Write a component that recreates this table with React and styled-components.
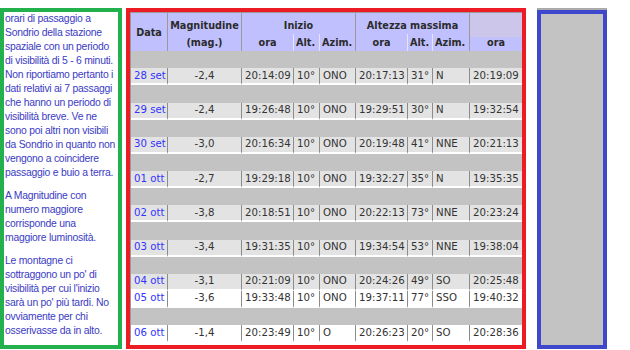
import React from "react";
import styled, { createGlobalStyle } from "styled-components";

const GlobalStyle = createGlobalStyle`
  body {
    margin: 0;
    background: #fff;
  }
`;

const notes = [
  [
    "orari di passaggio a",
    "Sondrio della stazione",
    "spaziale con un periodo",
    "di visibilità di 5 - 6 minuti.",
    "Non riportiamo pertanto i",
    "dati relativi ai 7 passaggi",
    "che hanno un periodo di",
    "visibilità breve. Ve ne",
    "sono poi altri non visibili",
    "da Sondrio in quanto non",
    "vengono a coincidere",
    "passaggio e buio a terra.",
  ],
  [
    "A Magnitudine con",
    "numero maggiore",
    "corrisponde una",
    "maggiore luminosità.",
  ],
  [
    "Le montagne ci",
    "sottraggono un po' di",
    "visibilità per cui l'inizio",
    "sarà un po' più tardi. No",
    "ovviamente per chi",
    "osserivasse da in alto.",
  ],
];

const passes = [
  { date: "28 set", mag: "-2,4", start: "20:14:09", alt0: "10°", az0: "ONO", top: "20:17:13", alt: "31°", az: "N", end: "20:19:09", gap: true },
  { date: "29 set", mag: "-2,4", start: "19:26:48", alt0: "10°", az0: "ONO", top: "19:29:51", alt: "30°", az: "N", end: "19:32:54", gap: true },
  { date: "30 set", mag: "-3,0", start: "20:16:34", alt0: "10°", az0: "ONO", top: "20:19:48", alt: "41°", az: "NNE", end: "20:21:13", gap: true },
  { date: "01 ott", mag: "-2,7", start: "19:29:18", alt0: "10°", az0: "ONO", top: "19:32:27", alt: "35°", az: "N", end: "19:35:35", gap: true },
  { date: "02 ott", mag: "-3,8", start: "20:18:51", alt0: "10°", az0: "ONO", top: "20:22:13", alt: "73°", az: "NNE", end: "20:23:24", gap: true },
  { date: "03 ott", mag: "-3,4", start: "19:31:35", alt0: "10°", az0: "ONO", top: "19:34:54", alt: "53°", az: "NNE", end: "19:38:04", gap: true },
  { date: "04 ott", mag: "-3,1", start: "20:21:09", alt0: "10°", az0: "ONO", top: "20:24:26", alt: "49°", az: "SO", end: "20:25:48", gap: true },
  { date: "05 ott", mag: "-3,6", start: "19:33:48", alt0: "10°", az0: "ONO", top: "19:37:11", alt: "77°", az: "SSO", end: "19:40:32", light: true },
  { date: "06 ott", mag: "-1,4", start: "20:23:49", alt0: "10°", az0: "O", top: "20:26:23", alt: "20°", az: "SO", end: "20:28:36", gap: true, light: true },
];

const widths = [37, 74, 52, 26, 36, 52, 25, 37, 52];

export default function App() {
  return (
    <Page>
      <GlobalStyle />
      <Notes>
        {notes.map((lines, i) => (
          <Para key={i}>
            {lines.map((l, j) => (
              <React.Fragment key={j}>
                {l}
                {j < lines.length - 1 && <br />}
              </React.Fragment>
            ))}
          </Para>
        ))}
      </Notes>

      <TablePanel>
        <Table>
          <colgroup>
            {widths.map((w, i) => (
              <Col key={i} $w={w} />
            ))}
          </colgroup>
          <thead>
            <HeadRow $h={21}>
              <Th rowSpan={2}>Data</Th>
              <Th rowSpan={2} $pad>
                Magnitudine
                <br />
                (mag.)
              </Th>
              <Th colSpan={3} $pad>Inizio</Th>
              <Th colSpan={3} $pad>Altezza massima</Th>
              <EndTh rowSpan={2}>ora</EndTh>
            </HeadRow>
            <HeadRow $h={16}>
              <Th $soft>ora</Th>
              <Th $soft $left>Alt.</Th>
              <Th $left>Azim.</Th>
              <Th $soft>ora</Th>
              <Th $soft $left>Alt.</Th>
              <Th $left>Azim.</Th>
            </HeadRow>
          </thead>
          <tbody>
            {passes.map((p) => (
              <React.Fragment key={p.date}>
                {p.gap && (
                  <GapRow>
                    <Gap colSpan={9} />
                  </GapRow>
                )}
                <DataRow $light={p.light}>
                  <Td>
                    <DateLink>{p.date}</DateLink>
                  </Td>
                  <Td $center>{p.mag}</Td>
                  <Td>{p.start}</Td>
                  <Td>{p.alt0}</Td>
                  <Td>{p.az0}</Td>
                  <Td>{p.top}</Td>
                  <Td>{p.alt}</Td>
                  <Td>{p.az}</Td>
                  <Td>{p.end}</Td>
                </DataRow>
              </React.Fragment>
            ))}
          </tbody>
        </Table>
      </TablePanel>

      <Side />
    </Page>
  );
}

const Page = styled.div`
  display: flex;
  align-items: flex-start;
  padding-top: 8px;
  height: 350px;
  box-sizing: border-box;
  overflow: hidden;
`;

const Notes = styled.aside`
  width: 122px;
  height: 341px;
  flex: none;
  box-sizing: border-box;
  border: 4px solid #22b14c;
  padding: 0 0 0 1px;
  font-family: "Liberation Sans", Arial, sans-serif;
  font-size: 10.4px;
  letter-spacing: -0.25px;
  line-height: 14px;
  color: #3b3bc4;
  white-space: nowrap;
`;

const Para = styled.p`
  margin: 0;
  & + & {
    margin-top: 9px;
  }
`;

const TablePanel = styled.section`
  margin-left: 4px;
  width: 400px;
  height: 341px;
  flex: none;
  box-sizing: border-box;
  border: 4px solid #ed1c24;
  overflow: hidden;
  background: #fff;
`;

const Side = styled.div`
  margin-left: 11px;
  margin-top: 2px;
  width: 70px;
  height: 339px;
  flex: none;
  box-sizing: border-box;
  border: 4px solid #3f48cc;
  background: #c3c3c3;
  box-shadow: 0 -2px 0 #ababab;
`;

const Table = styled.table`
  width: 392px;
  table-layout: fixed;
  border-collapse: separate;
  border-spacing: 0;
  border-left: 1px solid #9a9a9a;
  border-top: 1px solid #9a9a9a;
  font-family: "DejaVu Sans", Verdana, sans-serif;
  color: #333;
`;

const Col = styled.col`
  width: ${(p) => p.$w}px;
`;

const HeadRow = styled.tr`
  height: ${(p) => p.$h}px;
`;

const Th = styled.th`
  padding: ${(p) => (p.$pad ? "3px 0 0" : p.$left ? "0 0 0 2px" : "0")};
  background: #c0c0ff;
  font-size: 9.7px;
  font-weight: bold;
  color: #2b2b2b;
  line-height: 17px;
  text-align: ${(p) => (p.$left ? "left" : "center")};
  white-space: nowrap;
  border-right: 1px solid ${(p) => (p.$soft ? "#e4e4fa" : "#9a9a9a")};
`;

const EndTh = styled.th`
  padding: 0 0 2px;
  vertical-align: bottom;
  background: linear-gradient(#cbc6ea 0 24px, #c0c0ff 24px);
  font-size: 9.7px;
  font-weight: bold;
  color: #2b2b2b;
  line-height: 12px;
  text-align: center;
`;

const GapRow = styled.tr`
  height: 17.25px;
`;

const Gap = styled.td`
  padding: 0;
  background: #c3c3c3;
`;

const DataRow = styled.tr`
  height: 17px;
  background: ${(p) => (p.$light ? "#fff" : "#e3e3e3")};
`;

const Td = styled.td`
  padding: 0 0 0 ${(p) => (p.$center ? "0" : "3px")};
  font-size: 10.2px;
  line-height: 14px;
  text-align: ${(p) => (p.$center ? "center" : "left")};
  white-space: nowrap;
  overflow: hidden;
  border-right: 1px solid #8c8c8c;
  border-bottom: 2px solid #fff;
  &:last-child {
    border-right: none;
  }
`;

const DateLink = styled.span`
  color: #3333ff;
`;
